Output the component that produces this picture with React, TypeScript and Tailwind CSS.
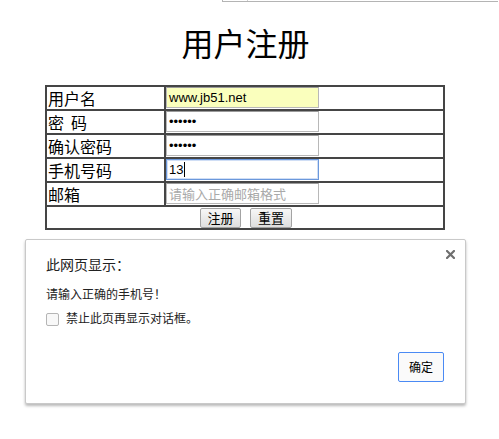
const cjk = "font-['Noto_Sans_CJK_SC',sans-serif]";
const latin = "font-['Liberation_Sans','Noto_Sans_CJK_SC',sans-serif]";
const labelCls = `w-[119px] border-r-2 border-[#454545] pl-[1px] text-[16px] leading-[22px] text-black ${cjk}`;

function Field({ children, focused = false, autofill = false }: { children: React.ReactNode; focused?: boolean; autofill?: boolean }) {
  return (
    <div
      className={`flex h-[21px] w-[153px] items-center pl-[2px] ${
        focused
          ? 'border border-[#6b98dc] shadow-[inset_0_0_0_1px_rgba(120,160,225,0.35)] bg-white'
          : autofill
            ? 'border border-[#b8b8b8] border-t-[#9a9a9a] bg-[#faffbd]'
            : 'border border-[#b8b8b8] border-t-[#9a9a9a] bg-white'
      }`}
    >
      {children}
    </div>
  );
}

export default function App() {
  return (
    <div className="h-[439px] w-[499px] overflow-hidden bg-white">
      {/* browser chrome remnant at the very top */}
      <div className="ml-[222px] flex h-[2px] w-[276px] border-b border-l border-[#b4b4b4]">
        <div className="ml-[24px] h-full w-px bg-[#cfcfcf]" />
      </div>

      <div className="w-[491px]">
        <h1 className={`mt-[20px] text-center text-[32px] leading-[40px] font-normal text-black ${cjk}`}>用户注册</h1>

        <div className="mt-[23px] ml-[45px] w-[400px] border-2 border-[#454545]">
          <div className="flex h-[22px]">
            <div className={labelCls}>用户名</div>
            <div className="flex-1">
              <Field autofill>
                <span className={`text-[13px] leading-[16px] text-black ${latin}`}>www.jb51.net</span>
              </Field>
            </div>
          </div>
          <div className="flex h-[24px] border-t-2 border-[#454545]">
            <div className={labelCls}>
              <span>密</span>
              <span className="ml-[7px]">码</span>
            </div>
            <div className="flex-1">
              <Field>
                <span className={`text-[13px] leading-[16px] text-black ${latin}`}>••••••</span>
              </Field>
            </div>
          </div>
          <div className="flex h-[24px] border-t-2 border-[#454545]">
            <div className={labelCls}>确认密码</div>
            <div className="flex-1">
              <Field>
                <span className={`text-[13px] leading-[16px] text-black ${latin}`}>••••••</span>
              </Field>
            </div>
          </div>
          <div className="flex h-[24px] border-t-2 border-[#454545]">
            <div className={labelCls}>手机号码</div>
            <div className="flex-1">
              <Field focused>
                <span className={`text-[13px] leading-[16px] text-black ${latin}`}>13</span>
                <span className="ml-[1px] h-[15px] w-px bg-black" />
              </Field>
            </div>
          </div>
          <div className="flex h-[24px] border-t-2 border-[#454545]">
            <div className={labelCls}>邮箱</div>
            <div className="flex-1">
              <Field>
                <span className={`text-[13px] leading-[16px] text-[#a9a9a9] ${cjk}`}>请输入正确邮箱格式</span>
              </Field>
            </div>
          </div>
          <div className="flex h-[23px] items-center justify-center gap-[9px] border-t-2 border-[#454545] pl-[2px]">
            <button className={`h-[20px] w-[41px] rounded-[2px] border border-[#a3a3a3] bg-gradient-to-b from-[#f7f7f7] to-[#dedede] text-[13px] leading-[18px] text-black ${cjk}`}>
              注册
            </button>
            <button className={`h-[20px] w-[42px] rounded-[2px] border border-[#a3a3a3] bg-gradient-to-b from-[#f7f7f7] to-[#dedede] text-[13px] leading-[18px] text-black ${cjk}`}>
              重置
            </button>
          </div>
        </div>
      </div>

      {/* alert dialog */}
      <div className={`mt-[9px] ml-[25px] flex h-[165px] w-[441px] flex-col rounded-[2px] border border-[#c9c9c9] bg-white pr-[10px] pl-[20px] shadow-[0_2px_3px_rgba(0,0,0,0.28)] ${cjk}`}>
        <div className="mt-[14px] flex items-start justify-between">
          <div className="text-[14px] leading-[20px] text-[#222]">此网页显示：</div>
          <svg width="9" height="9" viewBox="0 0 9 9" className="-mt-[4px]">
            <path d="M1 1 L8 8 M8 1 L1 8" stroke="#6f6f6f" strokeWidth="2.2" strokeLinecap="square" />
          </svg>
        </div>
        <div className="mt-[11px] text-[12px] leading-[18px] text-[#222]">请输入正确的手机号！</div>
        <div className="mt-[8px] flex items-start">
          <div className="mt-[2px] h-[13px] w-[13px] rounded-[2px] border border-[#b5b5b5] bg-[#f8f8f8]" />
          <div className="ml-[7px] text-[12px] leading-[14px] text-[#222]">禁止此页再显示对话框。</div>
        </div>
        <div className="mt-[26px] mr-[11px] flex justify-end">
          <button className="h-[30px] w-[46px] rounded-[2px] border border-[#4a8af4] bg-[#fafafa] text-[12px] leading-[28px] text-black">
            确定
          </button>
        </div>
      </div>
    </div>
  );
}
